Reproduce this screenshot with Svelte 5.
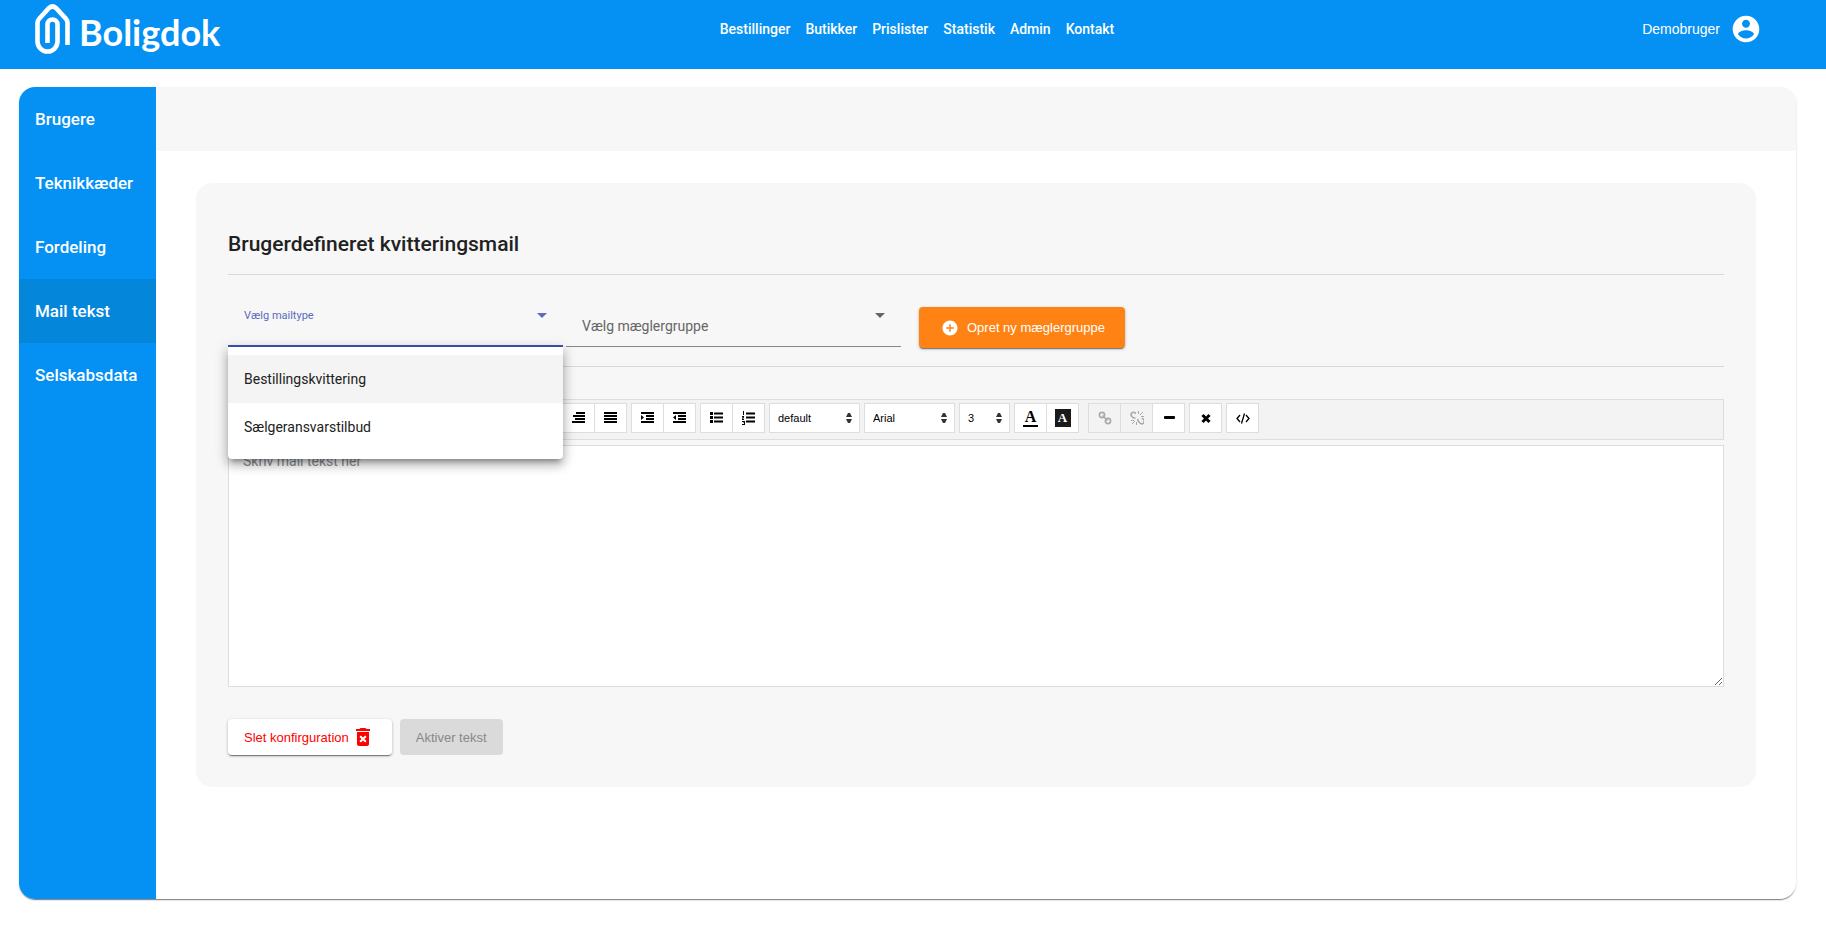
<script lang="ts">
	const navLinks = ["Bestillinger", "Butikker", "Prislister", "Statistik", "Admin", "Kontakt"];
	const sideLinks = ["Brugere", "Teknikkæder", "Fordeling", "Mail tekst", "Selskabsdata"];
	const mailTypes = ["Bestillingskvittering", "Sælgeransvarstilbud"];

	type Tool = { label: string; path: string };

	// toolbar icons, drawn on a 14x14 grid
	const history: Tool[] = [
		{ label: "Fortryd", path: "M1 2v5h5L4 5a4 4 0 1 1 0 5l-2 1a6 6 0 1 0 1-8z" },
		{ label: "Gentag", path: "M13 2v5H8l2-2a4 4 0 1 0 0 5l2 1a6 6 0 1 1-1-8z" }
	];
	const marks: Tool[] = [
		{ label: "Fed", path: "M3 1h5a3 3 0 0 1 2 5 3 3 0 0 1-2 7H3zM5 3v3h3V3zM5 8v3h3V8z" },
		{ label: "Kursiv", path: "M5 1h6v2H9l-2 8h2v2H3v-2h2l2-8H5z" },
		{ label: "Understreget", path: "M2 1h3v6a2 2 0 0 0 4 0V1h3v6a5 5 0 0 1-10 0zM1 13h12v1H1z" },
		{ label: "Gennemstreget", path: "M1 6h12v2H1zM4 2h6v2H4zM4 10h6v2H4z" },
		{ label: "Sænket", path: "M1 3h2l2 3 2-3h2L6 7l3 4H7L5 8l-2 3H1l3-4zM10 9h3v4h-3z" },
		{ label: "Hævet", path: "M1 3h2l2 3 2-3h2L6 7l3 4H7L5 8l-2 3H1l3-4zM10 1h3v4h-3z" }
	];
	const aligns: Tool[] = [
		{ label: "Venstrestillet", path: "M1 1h9v2H1zM1 4h12v2H1zM1 7h10v2H1zM1 10h13v2H1z" },
		{ label: "Centreret", path: "M3 1h8v2H3zM1 4h12v2H1zM3 7h8v2H3zM0 10h14v2H0z" },
		{ label: "Højrestillet", path: "M4 1h9v2H4zM1 4h12v2H1zM3 7h10v2H3zM0 10h13v2H0z" },
		{ label: "Lige margener", path: "M0 1h13v2H0zM0 4h13v2H0zM0 7h13v2H0zM0 10h13v2H0z" }
	];
	const indents: Tool[] = [
		{ label: "Øg indrykning", path: "M0 1h13v2H0zM5 4h8v2H5zM5 7h8v2H5zM0 10h13v2H0zM0 4l3 2.500L0 9z" },
		{ label: "Mindsk indrykning", path: "M0 1h13v2H0zM5 4h8v2H5zM5 7h8v2H5zM0 10h13v2H0zM3 4v5L0 6.500z" }
	];
	const lists: Tool[] = [
		{ label: "Punktliste", path: "M0 1h3v3H0zM4 1.500h9v2H4zM0 5h3v3H0zM4 5.500h9v2H4zM0 9h3v3H0zM4 9.500h9v2H4z" },
		{ label: "Nummereret liste", path: "M4 1.500h9v2H4zM4 5.500h9v2H4zM4 9.500h9v2H4zM1 0h1v4H1zM0 5h2v1.500L1 8h1v1H0V8l1-1.500H0zM0 10h3v4H0v-1h2v-1H1v-.6h1V11H0z" }
	];
	const groups = [history, marks, aligns, indents, lists];

	const selects = [
		{ label: "Format", value: "default", size: "wide" },
		{ label: "Skrifttype", value: "Arial", size: "wide" },
		{ label: "Størrelse", value: "3", size: "narrow" }
	];

	let body = $state("");
</script>

<header class="topbar">
	<a class="logo" href="#forside" aria-label="Boligdok">
		<svg width="36" height="52" viewBox="0 0 36 52" aria-hidden="true">
			<path
				d="M32.500 42V20Q32.500 17.500 30.800 15.700L21 5Q17.500 2 14 5L4.200 15.700Q2.500 17.500 2.500 20V38.500a10 10 0 0 0 20 0V21.500a5 5 0 0 0-10 0V40"
				fill="none"
				stroke="#fff"
				stroke-width="4.600"
			/>
		</svg>
		<span>Boligdok</span>
	</a>
	<nav class="main-nav" aria-label="Hovedmenu">
		{#each navLinks as link}
			<a href={`#${link.toLowerCase()}`}>{link}</a>
		{/each}
	</nav>
	<button class="user" type="button">
		Demobruger
		<svg width="32" height="32" viewBox="0 0 24 24" aria-hidden="true">
			<path
				fill="#fff"
				d="M12 2C6.480 2 2 6.480 2 12s4.480 10 10 10 10-4.480 10-10S17.520 2 12 2zm0 3c1.660 0 3 1.340 3 3s-1.340 3-3 3-3-1.340-3-3 1.340-3 3-3zm0 14.200c-2.500 0-4.710-1.280-6-3.220.030-1.990 4-3.080 6-3.080 1.990 0 5.970 1.090 6 3.080-1.290 1.940-3.500 3.220-6 3.220z"
			/>
		</svg>
	</button>
</header>

<div class="shell">
	<nav class="sidebar" aria-label="Administration">
		{#each sideLinks as link}
			<a class:active={link === "Mail tekst"} href={`#${link.toLowerCase().replace(" ", "-")}`}>{link}</a>
		{/each}
	</nav>
	<main>
		<div class="strip"></div>
		<section class="panel">
			<h1>Brugerdefineret kvitteringsmail</h1>

			<div class="filters">
				<div class="field open">
					<button class="field-box" type="button" aria-haspopup="listbox" aria-expanded="true">
						<span class="field-label">Vælg mailtype</span>
						<span class="arrow"></span>
					</button>
					<ul class="menu" role="listbox" aria-label="Vælg mailtype">
						{#each mailTypes as type, i}
							<li class:hover={i === 0} role="option" aria-selected="false">{type}</li>
						{/each}
					</ul>
				</div>
				<div class="field">
					<button class="field-box" type="button" aria-haspopup="listbox" aria-expanded="false">
						<span class="field-label">Vælg mæglergruppe</span>
						<span class="arrow"></span>
					</button>
				</div>
				<button class="create" type="button">
					<svg width="18" height="18" viewBox="0 0 24 24" aria-hidden="true">
						<path
							fill="#fff"
							d="M12 2C6.480 2 2 6.480 2 12s4.480 10 10 10 10-4.480 10-10S17.520 2 12 2zm5 11h-4v4h-2v-4H7v-2h4V7h2v4h4v2z"
						/>
					</svg>
					Opret ny mæglergruppe
				</button>
			</div>

			<div class="toolbar" role="toolbar" aria-label="Tekstværktøjer">
				{#each groups as group}
					<div class="group">
						{#each group as tool}
							<button class="tool" type="button" aria-label={tool.label}>
								<svg width="14" height="14" viewBox="0 0 14 14" aria-hidden="true">
									<path d={tool.path} fill-rule="evenodd" />
								</svg>
							</button>
						{/each}
					</div>
				{/each}
				{#each selects as item}
					<div class={`picker ${item.size}`}>
						<select aria-label={item.label}>
							<option>{item.value}</option>
						</select>
						<svg width="6" height="10" viewBox="0 0 6 10" aria-hidden="true">
							<path d="M0 4 2 0h2l2 4zM0 6h6L4 10H2z" fill="#333" />
						</svg>
					</div>
				{/each}
				<div class="group colors">
					<button class="tool" type="button" aria-label="Tekstfarve">
						<span class="letter">A</span>
					</button>
					<button class="tool" type="button" aria-label="Baggrundsfarve">
						<span class="letter filled">A</span>
					</button>
				</div>
				<div class="group">
					<button class="tool" type="button" aria-label="Indsæt link" disabled>
						<svg width="14" height="14" viewBox="0 0 14 14" aria-hidden="true">
							<g fill="none" stroke="currentColor" stroke-width="1.600">
								<circle cx="4" cy="4" r="2.600" />
								<circle cx="10" cy="10" r="2.600" />
								<path d="M4.500 4.500l5 5" />
							</g>
						</svg>
					</button>
					<button class="tool" type="button" aria-label="Fjern link" disabled>
						<svg width="14" height="14" viewBox="0 0 14 14" aria-hidden="true">
							<g fill="none" stroke="currentColor">
								<path stroke-width="1.600" d="M6 2.500 4.500 1.500a2.400 2.400 0 0 0-3 3.500l2 2h2M8 8v2l2 2a2.400 2.400 0 0 0 3.500-3.500L12 7" />
								<path d="M8.500 0v3M10 4l3-3M11 5.500h3M4 9.500H1M5 10l-3 3M6.500 11v3" />
							</g>
						</svg>
					</button>
					<button class="tool" type="button" aria-label="Vandret streg">
						<svg width="14" height="14" viewBox="0 0 14 14" aria-hidden="true">
							<rect x="2" y="5" width="11" height="3" rx="1" />
						</svg>
					</button>
				</div>
				<div class="group">
					<button class="tool" type="button" aria-label="Ryd formatering">
						<svg width="14" height="14" viewBox="0 0 14 14" aria-hidden="true">
							<path d="M3.500 4l7 7M10.500 4l-7 7" stroke="#000" stroke-width="3" />
						</svg>
					</button>
				</div>
				<div class="group">
					<button class="tool" type="button" aria-label="HTML-kode">
						<svg width="14" height="14" viewBox="0 0 14 14" aria-hidden="true">
							<path d="M4 4 1 7.500 4 11M10 4l3 3.500L10 11M8.500 2.500l-3 10" fill="none" stroke="#000" stroke-width="1.300" />
						</svg>
					</button>
				</div>
			</div>
			<textarea aria-label="Mail tekst" placeholder="Skriv mail tekst her" bind:value={body}></textarea>

			<div class="actions">
				<button class="delete" type="button">
					Slet konfirguration
					<svg width="24" height="24" viewBox="0 0 24 24" aria-hidden="true">
						<path
							fill="currentColor"
							d="M6 19c0 1.100.9 2 2 2h8c1.100 0 2-.9 2-2V7H6v12zm2.460-7.120 1.410-1.410L12 12.590l2.120-2.120 1.410 1.410L13.410 14l2.120 2.120-1.410 1.410L12 15.410l-2.120 2.120-1.410-1.410L10.590 14l-2.130-2.120zM15.500 4l-1-1h-5l-1 1H5v2h14V4z"
						/>
					</svg>
				</button>
				<button class="activate" type="button" disabled>Aktiver tekst</button>
			</div>
		</section>
	</main>
</div>

<style>
	:global(body) {
		margin: 0;
		background: #fff;
		font-family: Roboto, "Liberation Sans", sans-serif;
		font-size: 14px;
		color: #212121;
	}

	* {
		box-sizing: border-box;
	}

	button {
		border: 0;
		padding: 0;
		background: none;
		color: inherit;
		font-family: "Liberation Sans", Arial, sans-serif;
		font-size: 13px;
	}

	svg {
		display: block;
		flex: none;
	}

	.topbar {
		display: grid;
		grid-template-columns: 1fr auto 1fr;
		align-items: center;
		height: 69px;
		padding: 0 24px 11px 32px;
		background: #0491f3;
		color: #fff;
	}

	.topbar a {
		color: inherit;
		text-decoration: none;
	}

	.logo {
		display: flex;
		align-items: center;
		gap: 8px;
		padding-left: 3px;
		font-family: Lato, sans-serif;
		font-size: 36px;
		font-weight: 700;
		line-height: 46px;
	}

	.logo span {
		padding-top: 6px;
	}

	.main-nav {
		display: flex;
		gap: 15px;
		font-weight: 500;
	}

	.user {
		display: flex;
		align-items: center;
		justify-self: end;
		gap: 10px;
		margin-right: 40px;
		font-size: 14px;
	}

	.shell {
		display: flex;
		min-height: calc(100vh - 115px);
		margin: 18px 30px 28px 19px;
		border-radius: 16px;
		overflow: hidden;
		box-shadow:
			0 2px 1px -1px rgba(0, 0, 0, 0.4),
			0 1px 2px rgba(0, 0, 0, 0.2);
	}

	.sidebar {
		flex: none;
		width: 137px;
		background: #0491f3;
	}

	.sidebar a {
		display: block;
		padding: 0 16px;
		color: #fff;
		font-size: 17px;
		font-weight: 500;
		line-height: 64px;
		text-decoration: none;
		white-space: nowrap;
	}

	.sidebar .active {
		background: #0486db;
	}

	main {
		flex: 1;
		min-width: 0;
	}

	.strip {
		height: 64px;
		background: #f7f7f7;
	}

	.panel {
		margin: 32px 40px;
		padding: 32px;
		border-radius: 16px;
		background: #f7f7f7;
	}

	h1 {
		margin: 0;
		padding: 13px 0;
		border-bottom: 1px solid #d8d8d8;
		font-size: 21px;
		font-weight: 500;
		line-height: 33px;
	}

	.filters {
		display: flex;
		align-items: flex-start;
		gap: 3px;
		height: 92px;
		padding-top: 32px;
		border-bottom: 1px solid #d8d8d8;
	}

	.field {
		position: relative;
		width: 335px;
	}

	.field-box {
		display: flex;
		justify-content: space-between;
		width: 100%;
		height: 40px;
		padding: 0 16px;
		border-bottom: 1px solid #888;
		color: #666;
		font-family: inherit;
		font-size: 14px;
		line-height: 38px;
		text-align: left;
	}

	.arrow {
		align-self: flex-start;
		margin-top: 6px;
		border: 5px solid transparent;
		border-top-color: currentColor;
		border-bottom: 0;
	}

	.open .field-box {
		border-bottom: 2px solid #3f51b5;
		color: #5c6bc0;
	}

	.open .field-label {
		font-size: 11px;
		line-height: 17px;
	}

	.menu {
		position: absolute;
		top: 100%;
		left: 0;
		z-index: 2;
		width: 100%;
		margin: 0;
		padding: 8px 0;
		border-radius: 0 0 4px 4px;
		background: #fff;
		box-shadow:
			0 5px 5px -3px rgba(0, 0, 0, 0.3),
			0 6px 10px 1px rgba(0, 0, 0, 0.18),
			0 3px 14px 2px rgba(0, 0, 0, 0.14);
		list-style: none;
	}

	.menu li {
		padding: 0 16px;
		line-height: 48px;
	}

	.menu .hover {
		background: #f4f4f4;
	}

	.create {
		display: flex;
		align-items: center;
		gap: 8px;
		height: 41px;
		margin-left: 15px;
		padding: 0 20px 0 22px;
		border-radius: 4px;
		background: #ff8314;
		box-shadow:
			0 2px 1px -1px rgba(0, 0, 0, 0.4),
			0 1px 3px rgba(0, 0, 0, 0.3);
		color: #fff;
	}

	.toolbar {
		display: flex;
		gap: 4px;
		margin-top: 32px;
		padding: 3px;
		height: 41px;
		border: 1px solid #ddd;
		background: #f3f3f3;
	}

	.group {
		display: flex;
	}

	.tool {
		display: flex;
		align-items: center;
		justify-content: center;
		width: 33px;
		height: 30px;
		border: 1px solid #ddd;
		background: #fff;
		color: #000;
	}

	.tool + .tool {
		margin-left: -1px;
	}

	.tool:disabled {
		background: #f3f3f3;
		color: #aaa;
	}

	.colors {
		margin-right: 5px;
	}

	.letter {
		width: 15px;
		border-bottom: 2px solid #000;
		font-family: "Liberation Serif", serif;
		font-size: 16px;
		font-weight: 700;
		line-height: 16px;
		text-align: center;
	}

	.filled {
		width: 16px;
		border-bottom: 0;
		background: #1a1a1a;
		color: #fff;
		font-size: 13px;
		line-height: 18px;
	}

	.picker {
		display: grid;
		align-items: center;
		height: 30px;
	}

	.picker select {
		grid-area: 1 / 1;
		width: 100%;
		height: 100%;
		padding: 0 8px;
		border: 1px solid #ddd;
		border-radius: 0;
		background: #fff;
		color: #000;
		font-family: "Liberation Sans", Arial, sans-serif;
		font-size: 11px;
		appearance: none;
	}

	.picker svg {
		grid-area: 1 / 1;
		justify-self: end;
		margin-right: 8px;
		pointer-events: none;
	}

	.wide {
		width: 91px;
	}

	.narrow {
		width: 51px;
	}

	textarea {
		display: block;
		width: 100%;
		height: 242px;
		margin-top: 5px;
		padding: 7px 14px;
		border: 1px solid #ddd;
		outline: 0;
		background: #fff;
		font: inherit;
		line-height: 16px;
		resize: vertical;
	}

	textarea::placeholder {
		color: #868e96;
	}

	.actions {
		display: flex;
		gap: 8px;
		margin-top: 32px;
	}

	.actions button {
		height: 36px;
		border-radius: 4px;
	}

	.delete {
		display: flex;
		align-items: center;
		gap: 2px;
		padding: 0 17px 0 16px;
		background: #fff;
		box-shadow:
			0 2px 1px -1px rgba(0, 0, 0, 0.4),
			0 1px 3px rgba(0, 0, 0, 0.3);
		color: #f00;
	}

	.activate {
		padding: 0 16px;
		background: #dadada;
		color: #888;
	}
</style>
